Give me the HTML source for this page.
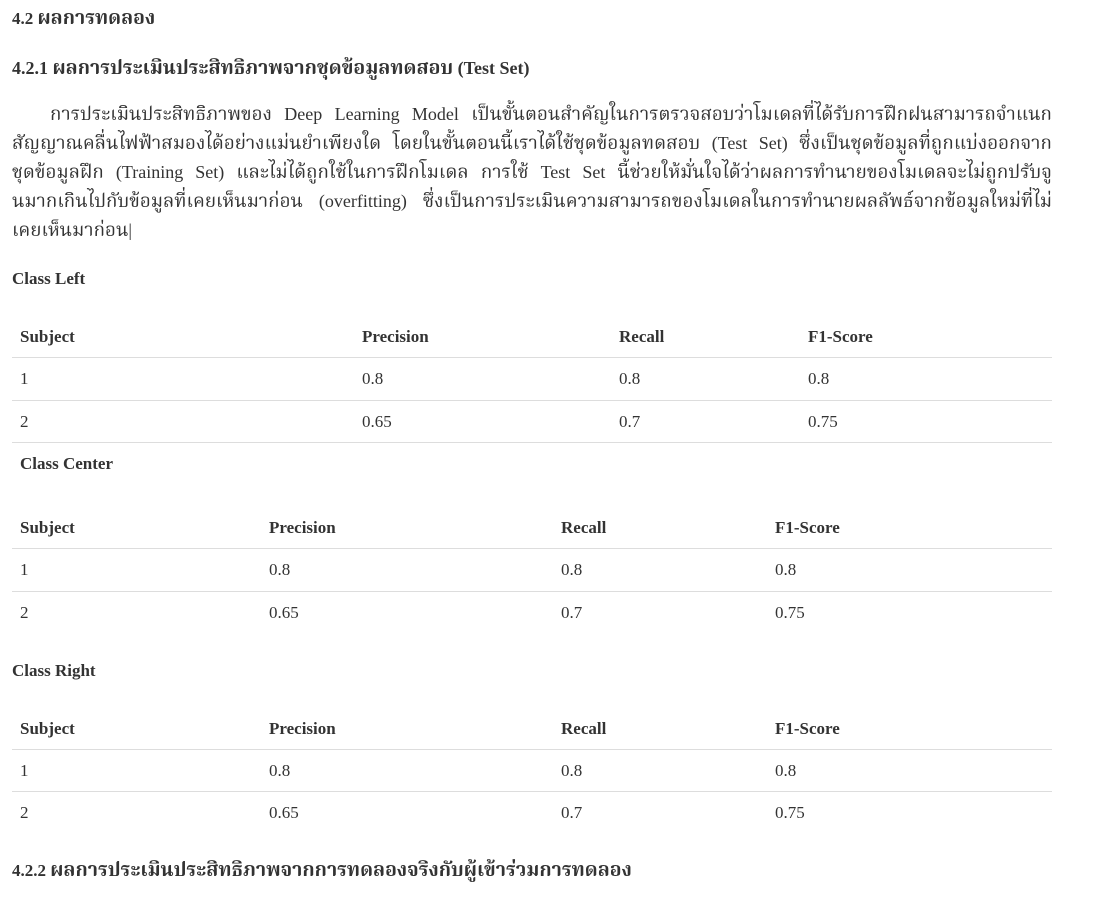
<!DOCTYPE html>
<html><head><meta charset="utf-8"><style>
body{margin:0;width:1102px;height:904px;background:#fff;color:#333;font-family:"Liberation Serif","Noto Serif Thai","Noto Sans Thai","Loma","Garuda",serif;font-size:17px;position:relative;overflow:hidden}
.a{position:absolute;line-height:24px;white-space:nowrap}
b,.b{font-weight:bold}
.t{font-size:19.5px}
.h{font-size:18px}
.l{position:absolute;left:12px;width:1040px;line-height:29px;height:29px;text-align:justify;text-align-last:justify;white-space:nowrap;overflow:visible;font-size:18px}
.l .t{font-size:18.8px}
.l.last{text-align-last:left}
.ln{position:absolute;left:12px;width:1040px;height:1px;background:#ddd}
</style></head><body>
<div class="a b" style="left:12px;top:7px">4.2 <span class="t">ผลการทดลอง</span></div>
<div class="a b h" style="left:12px;top:56px">4.2.1 <span class="t">ผลการประเมินประสิทธิภาพจากชุดข้อมูลทดสอบ</span> (Test Set)</div>
<div class="l" style="top:100px;padding-left:38px;width:1002px"><span class="t">การประเมินประสิทธิภาพของ</span> Deep Learning Model <span class="t">เป็นขั้นตอนสำคัญในการตรวจสอบว่าโมเดลที่ได้รับการฝึกฝนสามารถจำแนก</span></div>
<div class="l" style="top:129px"><span class="t">สัญญาณคลื่นไฟฟ้าสมองได้อย่างแม่นยำเพียงใด โดยในขั้นตอนนี้เราได้ใช้ชุดข้อมูลทดสอบ</span> (Test Set) <span class="t">ซึ่งเป็นชุดข้อมูลที่ถูกแบ่งออกจาก</span></div>
<div class="l" style="top:158px"><span class="t">ชุดข้อมูลฝึก</span> (Training Set) <span class="t">และไม่ได้ถูกใช้ในการฝึกโมเดล การใช้</span> Test Set <span class="t">นี้ช่วยให้มั่นใจได้ว่าผลการทำนายของโมเดลจะไม่ถูกปรับจู</span></div>
<div class="l" style="top:187px"><span class="t">นมากเกินไปกับข้อมูลที่เคยเห็นมาก่อน</span> (overfitting) <span class="t">ซึ่งเป็นการประเมินความสามารถของโมเดลในการทำนายผลลัพธ์จากข้อมูลใหม่ที่ไม่</span></div>
<div class="l last" style="top:216px"><span class="t">เคยเห็นมาก่อน</span>|</div>

<div class="a b" style="left:12px;top:267px">Class Left</div>
<div class="a b" style="left:20px;top:325px">Subject</div><div class="a b" style="left:362px;top:325px">Precision</div><div class="a b" style="left:619px;top:325px">Recall</div><div class="a b" style="left:808px;top:325px">F1-Score</div>
<div class="ln" style="top:357px"></div>
<div class="a" style="left:20px;top:367px">1</div><div class="a" style="left:362px;top:367px">0.8</div><div class="a" style="left:619px;top:367px">0.8</div><div class="a" style="left:808px;top:367px">0.8</div>
<div class="ln" style="top:400px"></div>
<div class="a" style="left:20px;top:410px">2</div><div class="a" style="left:362px;top:410px">0.65</div><div class="a" style="left:619px;top:410px">0.7</div><div class="a" style="left:808px;top:410px">0.75</div>
<div class="ln" style="top:442px"></div>

<div class="a b" style="left:20px;top:452px">Class Center</div>
<div class="a b" style="left:20px;top:516px">Subject</div><div class="a b" style="left:269px;top:516px">Precision</div><div class="a b" style="left:561px;top:516px">Recall</div><div class="a b" style="left:775px;top:516px">F1-Score</div>
<div class="ln" style="top:548px"></div>
<div class="a" style="left:20px;top:558px">1</div><div class="a" style="left:269px;top:558px">0.8</div><div class="a" style="left:561px;top:558px">0.8</div><div class="a" style="left:775px;top:558px">0.8</div>
<div class="ln" style="top:591px"></div>
<div class="a" style="left:20px;top:601px">2</div><div class="a" style="left:269px;top:601px">0.65</div><div class="a" style="left:561px;top:601px">0.7</div><div class="a" style="left:775px;top:601px">0.75</div>

<div class="a b" style="left:12px;top:659px">Class Right</div>
<div class="a b" style="left:20px;top:717px">Subject</div><div class="a b" style="left:269px;top:717px">Precision</div><div class="a b" style="left:561px;top:717px">Recall</div><div class="a b" style="left:775px;top:717px">F1-Score</div>
<div class="ln" style="top:749px"></div>
<div class="a" style="left:20px;top:759px">1</div><div class="a" style="left:269px;top:759px">0.8</div><div class="a" style="left:561px;top:759px">0.8</div><div class="a" style="left:775px;top:759px">0.8</div>
<div class="ln" style="top:791px"></div>
<div class="a" style="left:20px;top:801px">2</div><div class="a" style="left:269px;top:801px">0.65</div><div class="a" style="left:561px;top:801px">0.7</div><div class="a" style="left:775px;top:801px">0.75</div>

<div class="a b" style="left:12px;top:859px">4.2.2 <span class="t">ผลการประเมินประสิทธิภาพจากการทดลองจริงกับผู้เข้าร่วมการทดลอง</span></div>
</body></html>
